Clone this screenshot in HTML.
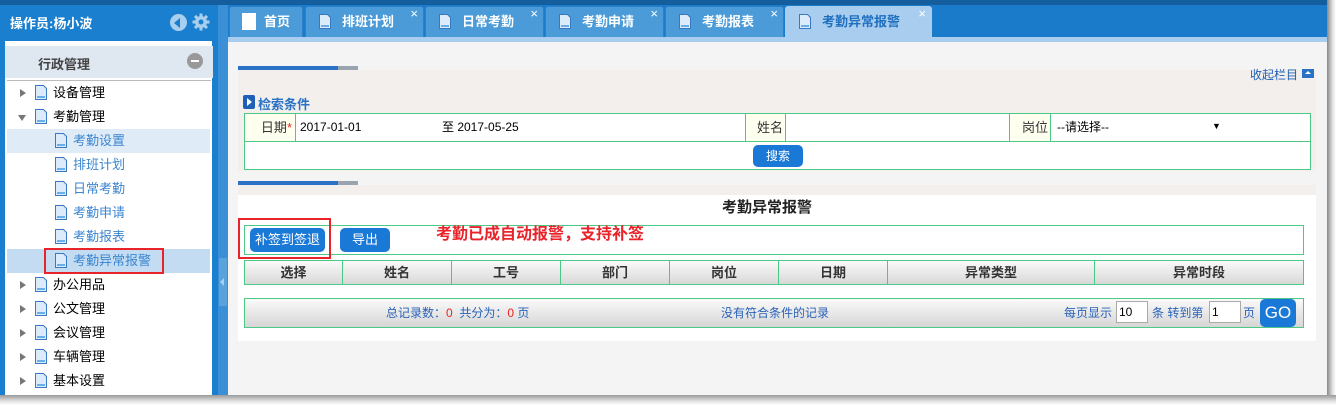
<!DOCTYPE html>
<html><head><meta charset="utf-8"><style>
*{margin:0;padding:0;box-sizing:border-box}
body{width:1336px;height:405px;overflow:hidden;background:#fff;font-family:"Liberation Sans","Noto Sans CJK SC",sans-serif;font-size:12px;position:relative}
.a{position:absolute}
.doc{position:absolute;width:14px;height:17px}
.tab{position:absolute;top:6px;height:31px;background:#4b9bd9;border:1px solid #2d7fc7;border-bottom:none;border-radius:3px 3px 0 0;color:#fff;font-weight:bold;font-size:13px;line-height:29px;padding-left:36px}
.tab .x{position:absolute;right:5px;top:-8px;font-weight:normal;font-size:13px}
.tab .doc{left:12px;top:6px}
.it{position:absolute;left:7px;width:203px;height:24px;font-size:13px;line-height:24px;color:#000}
.it .ar{position:absolute;left:13px;top:8px;width:0;height:0;border-left:6px solid #777;border-top:4px solid transparent;border-bottom:4px solid transparent}
.it .ad{position:absolute;left:11px;top:10px;width:0;height:0;border-top:6px solid #777;border-left:4px solid transparent;border-right:4px solid transparent}
.it .doc{left:27px;top:3px}
.it span{position:absolute;left:46px}
.sub .doc{left:47px}
.sub span{left:66px;color:#3b86d0}
.th{position:absolute;top:0;height:23px;border-right:1px solid #4dc886;text-align:center;font-weight:bold;font-size:13px;line-height:23px;color:#333}
.btn{position:absolute;background:#1a78d6;color:#fff;border-radius:5px;text-align:center;font-size:13px}
</style></head><body>
<div class="a" style="left:0;top:0;width:1327px;height:5px;background:#145e9e"></div>
<div class="a" style="left:1327px;top:0;width:9px;height:405px;background:linear-gradient(90deg,#888,#ddd 60%,#fff)"></div>
<div class="a" style="left:0;top:395px;width:1336px;height:10px;background:linear-gradient(#999,#e0e0e0 60%,#fff)"></div>

<div class="a" style="left:0;top:5px;width:218px;height:390px;background:#1a7fcf"></div>
<div class="a" style="left:10px;top:13px;color:#fff;font-weight:bold;font-size:13px">操作员:杨小波</div>
<div class="a" style="left:170px;top:14px;width:17px;height:17px;border-radius:50%;background:#a9cfee"></div>
<div class="a" style="left:174px;top:18px;width:0;height:0;border-right:6px solid #1a7fcf;border-top:5px solid transparent;border-bottom:5px solid transparent"></div>
<svg class="a" style="left:192px;top:13px" width="18" height="18" viewBox="0 0 18 18"><g fill="#a9cfee"><circle cx="9" cy="9" r="6"/><rect x="7.5" y="0.5" width="3" height="17"/><rect x="0.5" y="7.5" width="17" height="3"/><rect x="7.5" y="0.5" width="3" height="17" transform="rotate(45 9 9)"/><rect x="7.5" y="0.5" width="3" height="17" transform="rotate(-45 9 9)"/></g><circle cx="9" cy="9" r="2.5" fill="#1a7fcf"/></svg>
<div class="a" style="left:5px;top:41px;width:207px;height:354px;background:#fff"></div>
<div class="a" style="left:5px;top:46px;width:208px;height:32px;background:#dfe8f1"></div>
<div class="a" style="left:38px;top:54px;font-weight:bold;font-size:13px;color:#444">行政管理</div>
<div class="a" style="left:187px;top:53px;width:16px;height:16px;border-radius:50%;background:#999"></div>
<div class="a" style="left:191px;top:60px;width:8px;height:2px;background:#fff"></div>
<div class="a" style="left:7px;top:80px;width:204px;height:1px;background:#bbb"></div>

<div class="it" style="top:81px"><i class="ar"></i><svg class="doc"><path d="M1.5 1.5h8l3 3v11h-11z" fill="#dcebfa" stroke="#3a78c4"/><rect x="3" y="12" width="8" height="2" fill="#6ab0e8"/></svg><span>设备管理</span></div>
<div class="it" style="top:105px"><i class="ad"></i><svg class="doc"><path d="M1.5 1.5h8l3 3v11h-11z" fill="#dcebfa" stroke="#3a78c4"/><rect x="3" y="12" width="8" height="2" fill="#6ab0e8"/></svg><span>考勤管理</span></div>
<div class="it sub" style="top:129px;background:#dfecf7"><svg class="doc"><path d="M1.5 1.5h8l3 3v11h-11z" fill="#dcebfa" stroke="#3a78c4"/><rect x="3" y="12" width="8" height="2" fill="#6ab0e8"/></svg><span>考勤设置</span></div>
<div class="it sub" style="top:153px"><svg class="doc"><path d="M1.5 1.5h8l3 3v11h-11z" fill="#dcebfa" stroke="#3a78c4"/><rect x="3" y="12" width="8" height="2" fill="#6ab0e8"/></svg><span>排班计划</span></div>
<div class="it sub" style="top:177px"><svg class="doc"><path d="M1.5 1.5h8l3 3v11h-11z" fill="#dcebfa" stroke="#3a78c4"/><rect x="3" y="12" width="8" height="2" fill="#6ab0e8"/></svg><span>日常考勤</span></div>
<div class="it sub" style="top:201px"><svg class="doc"><path d="M1.5 1.5h8l3 3v11h-11z" fill="#dcebfa" stroke="#3a78c4"/><rect x="3" y="12" width="8" height="2" fill="#6ab0e8"/></svg><span>考勤申请</span></div>
<div class="it sub" style="top:225px"><svg class="doc"><path d="M1.5 1.5h8l3 3v11h-11z" fill="#dcebfa" stroke="#3a78c4"/><rect x="3" y="12" width="8" height="2" fill="#6ab0e8"/></svg><span>考勤报表</span></div>
<div class="it sub" style="top:249px;background:#c3dcf1"><svg class="doc"><path d="M1.5 1.5h8l3 3v11h-11z" fill="#dcebfa" stroke="#3a78c4"/><rect x="3" y="12" width="8" height="2" fill="#6ab0e8"/></svg><span>考勤异常报警</span></div>
<div class="a" style="left:44px;top:248px;width:120px;height:26px;border:2px solid #e8232a"></div>
<div class="it" style="top:273px"><i class="ar"></i><svg class="doc"><path d="M1.5 1.5h8l3 3v11h-11z" fill="#dcebfa" stroke="#3a78c4"/><rect x="3" y="12" width="8" height="2" fill="#6ab0e8"/></svg><span>办公用品</span></div>
<div class="it" style="top:297px"><i class="ar"></i><svg class="doc"><path d="M1.5 1.5h8l3 3v11h-11z" fill="#dcebfa" stroke="#3a78c4"/><rect x="3" y="12" width="8" height="2" fill="#6ab0e8"/></svg><span>公文管理</span></div>
<div class="it" style="top:321px"><i class="ar"></i><svg class="doc"><path d="M1.5 1.5h8l3 3v11h-11z" fill="#dcebfa" stroke="#3a78c4"/><rect x="3" y="12" width="8" height="2" fill="#6ab0e8"/></svg><span>会议管理</span></div>
<div class="it" style="top:345px"><i class="ar"></i><svg class="doc"><path d="M1.5 1.5h8l3 3v11h-11z" fill="#dcebfa" stroke="#3a78c4"/><rect x="3" y="12" width="8" height="2" fill="#6ab0e8"/></svg><span>车辆管理</span></div>
<div class="it" style="top:369px"><i class="ar"></i><svg class="doc"><path d="M1.5 1.5h8l3 3v11h-11z" fill="#dcebfa" stroke="#3a78c4"/><rect x="3" y="12" width="8" height="2" fill="#6ab0e8"/></svg><span>基本设置</span></div>

<div class="a" style="left:218px;top:5px;width:10px;height:390px;background:#3b8fd6"></div>
<div class="a" style="left:219px;top:258px;width:8px;height:48px;background:#5aa2dc"></div>
<div class="a" style="left:220px;top:278px;width:0;height:0;border-right:4px solid #a9cfee;border-top:4px solid transparent;border-bottom:4px solid transparent"></div>

<div class="a" style="left:228px;top:5px;width:1099px;height:32px;background:#1a7bcb"></div>
<div class="a" style="left:228px;top:37px;width:1099px;height:5px;background:#a9cdee"></div>
<div class="a" style="left:228px;top:42px;width:1099px;height:353px;background:#f4f4f4"></div>

<div class="tab" style="left:229px;width:74px;padding-left:34px"><div class="a" style="left:12px;top:6px;width:14px;height:17px;background:#fff"></div>首页</div>
<div class="tab" style="left:305px;width:119px"><svg class="doc"><path d="M1.5 1.5h8l3 3v11h-11z" fill="#dcebfa" stroke="#3a78c4"/><rect x="3" y="12" width="8" height="2" fill="#6ab0e8"/></svg>排班计划<span class="x">×</span></div>
<div class="tab" style="left:425px;width:119px"><svg class="doc"><path d="M1.5 1.5h8l3 3v11h-11z" fill="#dcebfa" stroke="#3a78c4"/><rect x="3" y="12" width="8" height="2" fill="#6ab0e8"/></svg>日常考勤<span class="x">×</span></div>
<div class="tab" style="left:545px;width:119px"><svg class="doc"><path d="M1.5 1.5h8l3 3v11h-11z" fill="#dcebfa" stroke="#3a78c4"/><rect x="3" y="12" width="8" height="2" fill="#6ab0e8"/></svg>考勤申请<span class="x">×</span></div>
<div class="tab" style="left:665px;width:119px"><svg class="doc"><path d="M1.5 1.5h8l3 3v11h-11z" fill="#dcebfa" stroke="#3a78c4"/><rect x="3" y="12" width="8" height="2" fill="#6ab0e8"/></svg>考勤报表<span class="x">×</span></div>
<div class="tab" style="left:785px;width:147px;background:#a9cdee;color:#1f6fbf;border-color:#a9cdee;height:32px"><svg class="doc"><path d="M1.5 1.5h8l3 3v11h-11z" fill="#dcebfa" stroke="#3a78c4"/><rect x="3" y="12" width="8" height="2" fill="#6ab0e8"/></svg>考勤异常报警<span class="x" style="color:#fff">×</span></div>

<div class="a" style="left:238px;top:66px;width:100px;height:4px;background:#2a72c6"></div>
<div class="a" style="left:338px;top:66px;width:20px;height:4px;background:#9aa4b0"></div>
<div class="a" style="left:238px;top:70px;width:1078px;height:101px;background:#f2efec"></div>
<div class="a" style="left:1250px;top:66px;color:#1f5fb5;font-size:12px">收起栏目</div>
<div class="a" style="left:1302px;top:69px;width:12px;height:9px;background:#2a72c6"></div>
<div class="a" style="left:1305px;top:71px;width:0;height:0;border-bottom:3px solid #fff;border-left:3px solid transparent;border-right:3px solid transparent"></div>
<div class="a" style="left:243px;top:95px;width:12px;height:14px;background:#1e5fb8;border-radius:2px"></div>
<div class="a" style="left:247px;top:98px;width:0;height:0;border-left:5px solid #fff;border-top:4px solid transparent;border-bottom:4px solid transparent"></div>
<div class="a" style="left:258px;top:94px;color:#2a72c6;font-weight:bold;font-size:13px">检索条件</div>
<div class="a" style="left:244px;top:113px;width:1067px;height:57px;background:#fff;border:1px solid #4dc886"></div>
<div class="a" style="left:245px;top:114px;width:51px;height:27px;background:#fffff0;border-right:1px solid #4dc886;text-align:right;padding-right:3px;line-height:27px;font-size:13px;color:#333">日期<span style="color:#e22">*</span></div>
<div class="a" style="left:245px;top:141px;width:1065px;height:1px;background:#4dc886"></div>
<div class="a" style="left:300px;top:114px;line-height:27px;font-size:12px">2017-01-01</div>
<div class="a" style="left:442px;top:114px;line-height:27px;font-size:12px">至 2017-05-25</div>
<div class="a" style="left:745px;top:114px;width:41px;height:27px;background:#fffff0;border-left:1px solid #4dc886;border-right:1px solid #4dc886;text-align:right;padding-right:2px;line-height:27px;font-size:13px;color:#333">姓名</div>
<div class="a" style="left:1009px;top:114px;width:42px;height:27px;background:#fffff0;border-left:1px solid #4dc886;border-right:1px solid #4dc886;text-align:right;padding-right:2px;line-height:27px;font-size:13px;color:#333">岗位</div>
<div class="a" style="left:1057px;top:114px;line-height:27px;font-size:12px">--请选择--</div>
<div class="a" style="left:1212px;top:114px;line-height:25px;font-size:9px">▼</div>
<div class="btn" style="left:753px;top:145px;width:50px;height:22px;line-height:22px;font-size:12px">搜索</div>

<div class="a" style="left:238px;top:181px;width:100px;height:4px;background:#2a72c6"></div>
<div class="a" style="left:338px;top:181px;width:20px;height:4px;background:#9aa4b0"></div>
<div class="a" style="left:238px;top:185px;width:1078px;height:10px;background:#f2efec"></div>
<div class="a" style="left:238px;top:195px;width:1078px;height:146px;background:#fff"></div>
<div class="a" style="left:722px;top:196px;font-weight:bold;font-size:15px;color:#222">考勤异常报警</div>
<div class="a" style="left:244px;top:225px;width:1060px;height:30px;border:1px solid #4dc886"></div>
<div class="btn" style="left:250px;top:228px;width:75px;height:24px;line-height:24px">补签到签退</div>
<div class="btn" style="left:340px;top:228px;width:50px;height:24px;line-height:24px">导出</div>
<div class="a" style="left:238px;top:218px;width:93px;height:41px;border:2px solid #e8232a"></div>
<div class="a" style="left:436px;top:220px;color:#e8232a;font-size:16px;font-weight:bold">考勤已成自动报警，支持补签</div>

<div class="a" style="left:244px;top:260px;width:1060px;height:25px;border:1px solid #4dc886;background:linear-gradient(#fafafa,#d8d8d8)">
<div class="th" style="left:0;width:98px">选择</div>
<div class="th" style="left:98px;width:109px">姓名</div>
<div class="th" style="left:207px;width:109px">工号</div>
<div class="th" style="left:316px;width:109px">部门</div>
<div class="th" style="left:425px;width:109px">岗位</div>
<div class="th" style="left:534px;width:109px">日期</div>
<div class="th" style="left:643px;width:207px">异常类型</div>
<div class="th" style="left:850px;width:208px;border-right:none">异常时段</div>
</div>

<div class="a" style="left:244px;top:298px;width:1060px;height:30px;border:1px solid #4dc886;background:linear-gradient(#fafafa,#d6d6d6);color:#2a62b8;font-size:12px;line-height:28px">
<span class="a" style="left:141px">总记录数：<b style="color:#e22;font-weight:normal">0</b>&nbsp; 共分为：<b style="color:#e22;font-weight:normal">0</b> 页</span>
<span class="a" style="left:476px">没有符合条件的记录</span>
<span class="a" style="left:819px">每页显示</span>
<div class="a" style="left:871px;top:2px;width:32px;height:22px;background:#fff;border:1px solid #aaa;color:#000;line-height:20px;padding-left:2px">10</div>
<span class="a" style="left:907px">条 转到第</span>
<div class="a" style="left:964px;top:2px;width:32px;height:22px;background:#fff;border:1px solid #aaa;color:#000;line-height:20px;padding-left:2px">1</div>
<span class="a" style="left:998px">页</span>
<div class="btn" style="left:1015px;top:0;width:36px;height:28px;line-height:28px;font-size:17px">GO</div>
</div>
</body></html>
